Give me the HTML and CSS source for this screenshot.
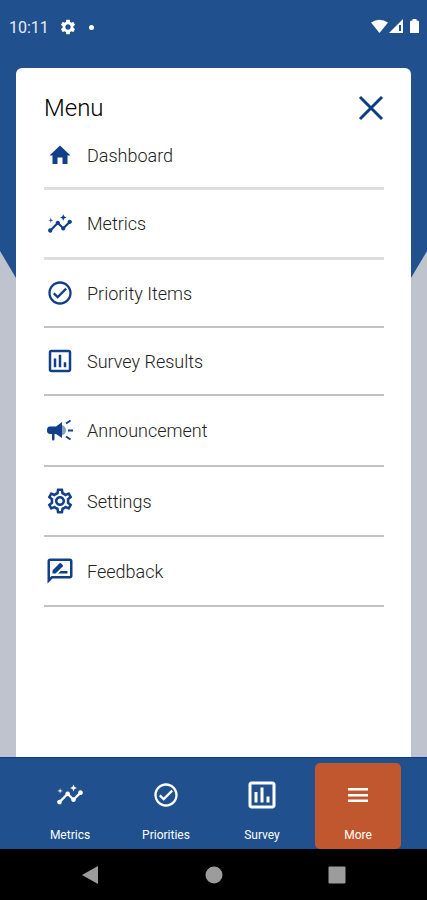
FILE: index.html
```html
<!DOCTYPE html>
<html lang="en">
<head>
<meta charset="utf-8">
<meta name="viewport" content="width=device-width, initial-scale=1">
<title>Menu</title>
<link rel="stylesheet" href="styles.css">
</head>
<body>
<svg class="sprite" aria-hidden="true">
  <symbol id="insights" viewBox="0 0 24 24"><path d="M21 8c-1.45 0-2.26 1.44-1.93 2.51l-3.55 3.56c-.3-.09-.74-.09-1.04 0l-2.55-2.55C12.27 10.45 11.46 9 10 9c-1.45 0-2.27 1.44-1.93 2.52l-4.56 4.55C2.44 15.74 1 16.55 1 18c0 1.1.9 2 2 2 1.45 0 2.26-1.44 1.93-2.51l4.55-4.56c.3.09.74.09 1.04 0l2.55 2.55C12.73 16.55 13.54 18 15 18c1.45 0 2.27-1.44 1.93-2.52l3.56-3.55C21.56 12.26 23 11.45 23 10c0-1.1-.9-2-2-2z"/><path d="M15 9l.94-2.07L18 6l-2.06-.93L15 3l-.92 2.07L12 6l2.08.93z"/><path class="spark" d="M3.5 11L4 9l2-.5L4 8l-.5-2L3 8l-2 .5L3 9z"/></symbol>
  <symbol id="check" viewBox="0 0 24 24"><path d="M12 2C6.48 2 2 6.48 2 12s4.48 10 10 10 10-4.48 10-10S17.520 2 12 2zm0 18c-4.410 0-8-3.590-8-8s3.590-8 8-8 8 3.590 8 8-3.590 8-8 8zm4.590-12.420L10 14.170l-2.590-2.580L6 13l4 4 8-8z"/></symbol>
  <symbol id="chart" viewBox="0 0 24 24"><path d="M19 3H5c-1.100 0-2 .9-2 2v14c0 1.100.9 2 2 2h14c1.100 0 2-.9 2-2V5c0-1.100-.9-2-2-2zm0 16H5V5h14v14zM7 10h2v7H7zm4-3h2v10h-2zm4 6h2v4h-2z"/></symbol>
  <symbol id="gear" viewBox="0 0 24 24"><path d="M19.14 12.94c.04-.3.06-.61.06-.94 0-.32-.02-.64-.07-.94l2.03-1.58c.18-.14.23-.41.12-.61l-1.92-3.32c-.12-.22-.37-.29-.59-.22l-2.39.96c-.5-.38-1.03-.7-1.62-.94l-.36-2.54c-.04-.24-.24-.41-.48-.41h-3.84c-.24 0-.43.17-.47.41l-.36 2.54c-.59.24-1.13.57-1.62.94l-2.39-.96c-.22-.08-.47 0-.59.22L2.740 8.870c-.12.21-.08.47.12.61l2.030 1.580c-.05.3-.09.63-.09.94s.02.64.07.94l-2.030 1.580c-.18.14-.23.41-.12.61l1.920 3.320c.12.22.37.29.59.22l2.390-.96c.5.38 1.030.7 1.620.94l.36 2.540c.05.24.24.41.48.41h3.840c.24 0 .44-.17.47-.41l.36-2.540c.59-.24 1.130-.56 1.620-.94l2.390.96c.22.08.47 0 .59-.22l1.920-3.320c.12-.22.07-.47-.12-.61l-2.010-1.580zM12 15.600c-1.980 0-3.600-1.620-3.600-3.600s1.620-3.600 3.600-3.600 3.600 1.620 3.600 3.600-1.620 3.600-3.600 3.600z"/></symbol>
</svg>
<div class="screen">
  <header class="status">
    <span class="time">10:11</span>
    <svg class="status-gear"><use href="#gear"/></svg>
    <span class="dot"></span>
    <svg class="signals" viewBox="0 0 50 16" aria-label="Wi-Fi, signal, battery">
      <path d="M0 3.500Q8.500-2 17 3.500L8.500 14z"/>
      <path d="M18 14L32 0v14z"/><path d="M28 6h2v6h-2z" class="signal-gap"/>
      <path d="M39 3q0-1.500 1.500-1.500h1V0h4v1.500h1q1.500 0 1.500 1.500v11h-9z"/>
    </svg>
  </header>
  <main class="sheet">
    <div class="sheet-head">
      <h1>Menu</h1>
      <button class="close" type="button" aria-label="Close"><svg viewBox="0 0 26 26"><path d="M2 2l22 22M24 2L2 24"/></svg></button>
    </div>
    <ul class="menu">
      <li class="first soft"><a href="#dashboard"><span class="icon"><svg class="s24" viewBox="0 0 24 24"><path d="M9.500 21v-6.500h5V21h5v-8.500h3L12 2.500 1.500 12.500h3V21z"/></svg></span>Dashboard</a></li>
      <li class="soft"><a href="#metrics"><span class="icon"><svg class="s26"><use href="#insights"/></svg></span>Metrics</a></li>
      <li class="short"><a href="#priority"><span class="icon"><svg class="s28"><use href="#check"/></svg></span>Priority Items</a></li>
      <li class="short"><a href="#survey"><span class="icon"><svg class="s30"><use href="#chart"/></svg></span>Survey Results</a></li>
      <li class="tall"><a href="#announcement"><span class="icon"><svg class="s26" viewBox="0 0 26 26"><g transform="translate(0 2)"><path d="M3 6.500h6l6-4.500v16l-6-4H7.500V19q0 1.500-1.300 1.500T5 19v-5H3Q0 14 0 10.200T3 6.500z"/><path class="horn" d="M15 5q4 1.500 4 5.200T15 15.500z"/><path class="rays" d="M19 3.500l4.500-3M21 10.500h5M19 16.500l4.500 3"/></g></svg></span>Announcement</a></li>
      <li><a href="#settings"><span class="icon"><svg class="s30" viewBox="0 0 24 24"><path d="M19.430 12.980c.04-.32.07-.64.07-.98s-.03-.66-.07-.98l2.110-1.650c.19-.15.24-.42.12-.64l-2-3.460c-.09-.16-.26-.25-.44-.25-.06 0-.12.01-.17.03l-2.490 1c-.52-.4-1.080-.73-1.690-.98l-.38-2.650C14.460 2.180 14.250 2 14 2h-4c-.25 0-.46.18-.49.42l-.38 2.650c-.61.25-1.170.59-1.690.98l-2.490-1c-.06-.02-.12-.03-.18-.03-.17 0-.34.09-.43.25l-2 3.460c-.13.22-.07.49.12.64l2.110 1.650c-.04.32-.07.65-.07.98s.03.66.07.98l-2.110 1.650c-.19.15-.24.42-.12.64l2 3.460c.09.16.26.25.44.25.06 0 .12-.01.17-.03l2.490-1c.52.4 1.080.73 1.690.98l.38 2.650c.03.24.24.42.49.42h4c.25 0 .46-.18.49-.42l.38-2.650c.61-.25 1.170-.59 1.690-.98l2.490 1c.06.02.12.03.18.03.17 0 .34-.09.43-.25l2-3.460c.12-.22.07-.49-.12-.64l-2.110-1.650zm-1.980-1.710c.04.31.05.52.05.73s-.02.43-.05.73l-.14 1.130.89.7 1.080.84-.7 1.210-1.270-.51-1.040-.42-.9.68c-.43.32-.84.56-1.250.73l-1.060.43-.16 1.130-.2 1.350h-1.400l-.19-1.350-.16-1.130-1.060-.43c-.43-.18-.83-.41-1.230-.71l-.91-.7-1.060.43-1.270.51-.7-1.210 1.080-.84.89-.7-.14-1.130c-.03-.31-.05-.54-.05-.74s.02-.43.05-.73l.14-1.130-.89-.7-1.080-.84.7-1.210 1.270.51 1.040.42.9-.68c.43-.32.84-.56 1.250-.73l1.060-.43.16-1.130.2-1.350h1.390l.19 1.350.16 1.130 1.060.43c.43.18.83.41 1.230.71l.91.7 1.060-.43 1.270-.51.7 1.210-1.070.85-.89.7.14 1.130zM12 8c-2.210 0-4 1.790-4 4s1.790 4 4 4 4-1.790 4-4-1.790-4-4-4zm0 6c-1.100 0-2-.9-2-2s.9-2 2-2 2 .9 2 2-.9 2-2 2z"/></svg></span>Settings</a></li>
      <li><a href="#feedback"><span class="icon"><svg class="s30" viewBox="0 0 24 24"><path d="M20 2H4c-1.100 0-2 .9-2 2v18l4-4h14c1.100 0 2-.9 2-2V4c0-1.100-.9-2-2-2zm0 14H5.170L4 17.170V4h16v12zM10.500 14H18v-2h-5.500zM14.360 8.130c.2-.2.2-.51 0-.71l-1.770-1.770c-.2-.2-.51-.2-.71 0L6 11.530V14h2.470l5.890-5.870z"/></svg></span>Feedback</a></li>
    </ul>
  </main>
  <nav class="tabs">
    <a href="#metrics"><span class="tab-icon"><svg class="s28"><use href="#insights"/></svg></span>Metrics</a>
    <a href="#priority"><span class="tab-icon"><svg class="s28"><use href="#check"/></svg></span>Priorities</a>
    <a href="#survey"><span class="tab-icon"><svg class="s36"><use href="#chart"/></svg></span>Survey</a>
    <a href="#more" class="active" aria-current="page"><span class="tab-icon"><svg class="s20" viewBox="0 0 20 20"><path d="M0 3h20v2.500H0zM0 9h20v2.500H0zM0 14.500h20V17H0z"/></svg></span>More</a>
  </nav>
  <footer class="system">
    <button type="button" aria-label="Back"><svg viewBox="0 0 20 20"><path d="M1 10L17 1v18z"/></svg></button>
    <button type="button" aria-label="Home"><svg viewBox="0 0 20 20"><circle cx="10" cy="10" r="8.500"/></svg></button>
    <button type="button" aria-label="Recent apps"><svg viewBox="0 0 20 20"><rect x="1.500" y="1.500" width="17" height="17" rx="1"/></svg></button>
  </footer>
</div>
</body>
</html>
```
FILE: styles.css
```css
* { box-sizing: border-box; }

body {
  margin: 0;
  font-family: Roboto, "Liberation Sans", sans-serif;
  background: #bfc3cd;
}

.sprite { position: absolute; width: 0; height: 0; }
svg { display: block; fill: currentColor; }
a { color: inherit; text-decoration: none; }
button { border: 0; padding: 0; background: none; color: inherit; }

.screen {
  display: flex;
  flex-direction: column;
  min-height: 100vh;
  position: relative;
  isolation: isolate;
}

/* Blue backdrop tapering towards the sheet */
.screen::before {
  content: "";
  position: absolute;
  inset: 0;
  z-index: -1;
  background: #20508d;
  clip-path: polygon(0 0, 100% 0, 100% 251px, calc(100% - 16px) 278px, 16px 278px, 0 251px);
}

.status {
  display: flex;
  align-items: center;
  height: 54px;
  padding: 0 6px 0 9px;
  color: #fff;
}
.time { font-size: 16px; color: #e4ebf8; }
.status-gear { width: 18px; height: 18px; margin-left: 10px; }
.dot { width: 5px; height: 5px; border-radius: 50%; background: #fff; margin-left: 12px; }
.signals { width: 50px; height: 16px; margin-left: auto; }
.signal-gap { fill: #20508d; }

.sheet {
  flex: 1;
  margin: 14px 16px 0;
  padding: 20px 27px 20px 28px;
  background: #fff;
  border-radius: 6px 6px 0 0;
}
.sheet-head {
  display: flex;
  align-items: center;
  justify-content: space-between;
  height: 39px;
}
h1 { margin: 0; font-size: 24px; font-weight: 300; color: #000; }
.close svg { width: 26px; height: 26px; fill: none; stroke: #0d3b86; stroke-width: 3; }

.menu { list-style: none; margin: 0; padding: 0; }
.menu li { height: 70px; border-bottom: 2px solid #c2c2c2; }
.menu .short { height: 68px; }
.menu .tall { height: 71px; }
.menu .first { height: 63px; }
.menu .first a { height: 56px; }
.menu .soft { border-bottom: 3px solid #dedede; }
.menu a {
  display: flex;
  align-items: center;
  gap: 11px;
  height: 100%;
  font-size: 18px;
  font-weight: 300;
  color: #222;
}
.icon { display: flex; justify-content: center; width: 32px; color: #113f88; }
.icon .spark, .horn { opacity: 0.5; }
.rays { fill: none; stroke: currentColor; stroke-width: 2; }

.s20 { width: 20px; height: 20px; }
.s24 { width: 24px; height: 24px; }
.s26 { width: 26px; height: 26px; }
.s28 { width: 28px; height: 28px; }
.s30 { width: 30px; height: 30px; }
.s36 { width: 36px; height: 36px; }

.tabs {
  display: flex;
  gap: 10px;
  padding: 5px 26px 0 27px;
  background: #20508d;
  border-top: 1px solid #0d3b86;
  color: #fff;
}
.tabs a {
  flex: 1;
  display: flex;
  flex-direction: column;
  align-items: center;
  height: 86px;
  padding-top: 13px;
  gap: 13px;
  border-radius: 5px;
  font-size: 12px;
  line-height: 16px;
}
.tab-icon { display: flex; align-items: center; height: 38px; }
.tabs .active { background: #c1572f; }

.system {
  display: flex;
  justify-content: center;
  gap: 103px;
  height: 51px;
  background: #000;
  color: #9c9c9c;
}
.system svg { width: 20px; height: 20px; }
```
